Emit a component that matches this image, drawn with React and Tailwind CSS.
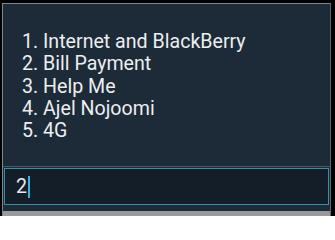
import React from "react";

const options = [
  "1. Internet and BlackBerry",
  "2. Bill Payment",
  "3. Help Me",
  "4. Ajel Nojoomi",
  "5. 4G",
];

const App = () => {
  return (
    <div className="w-[335px] h-[216px] bg-black overflow-hidden pt-[3px] pl-[2px]">
      <div className="w-[329px] h-[213px] flex flex-col bg-[#1d2a38] border-l border-t border-r border-l-[#7d8790] border-t-[#7d8790] border-r-[#5b6670]">
        <div
          className="h-[162px] pt-[27px] pl-[19px] text-[19.6px] leading-[22.3px] text-[#eceef0]"
          style={{ fontFamily: "Roboto, sans-serif" }}
        >
          {options.map((item) => (
            <div key={item}>{item}</div>
          ))}
        </div>
        <div className="h-px bg-[#4d5a66]" />
        <div className="px-[1px] pt-[1px] bg-[#1d2a38]">
          <div className="h-[37px] flex items-center pl-[11px] bg-[#141e28] border border-[#3b8ea6]">
            <span
              className="text-[19.6px] text-[#e8eaec] leading-none"
              style={{ fontFamily: "Roboto, sans-serif" }}
            >
              2
            </span>
            <span className="w-[2px] h-[22px] bg-[#33b5e5] ml-[1px]" />
          </div>
        </div>
        <div className="flex-1 bg-[#1d2a38]" />
        <div className="h-[5px] bg-[#9a9a9a]" />
      </div>
    </div>
  );
};

export default App;
